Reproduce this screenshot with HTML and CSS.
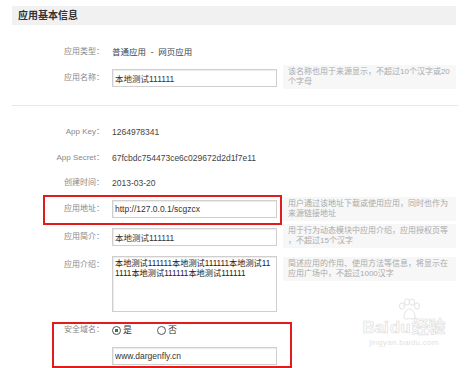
FILE: index.html
```html
<!DOCTYPE html>
<html lang="zh-CN">
<head>
  <meta charset="UTF-8">
  <meta name="viewport" content="width=device-width, initial-scale=1.0">
  <title>应用基本信息</title>
  <link rel="stylesheet" href="styles.css">
</head>
<body>
  <div class="page">
    <div class="section-title">应用基本信息</div>

    <div class="row row-type">
      <span class="label">应用类型：</span>
      <span class="value">普通应用 &nbsp;- &nbsp;网页应用</span>
    </div>

    <div class="row row-hinted row-name">
      <label class="label" for="appName">应用名称：</label>
      <input class="field" id="appName" type="text" value="本地测试111111">
      <div class="hint">该名称也用于来源显示，不超过10个汉字或20<br>个字母</div>
    </div>

    <hr class="divider">

    <div class="row row-key">
      <span class="label">App Key：</span>
      <span class="value">1264978341</span>
    </div>
    <div class="row row-secret">
      <span class="label">App Secret：</span>
      <span class="value">67fcbdc754473ce6c029672d2d1f7e11</span>
    </div>
    <div class="row row-created">
      <span class="label">创建时间：</span>
      <span class="value">2013-03-20</span>
    </div>

    <div class="row row-hinted row-url">
      <label class="label" for="appUrl">应用地址：</label>
      <input class="field" id="appUrl" type="text" value="http://127.0.0.1/scgzcx">
      <div class="hint">用户通过该地址下载或使用应用，同时也作为<br>来源链接地址</div>
    </div>

    <div class="row row-hinted row-brief">
      <label class="label" for="appBrief">应用简介：</label>
      <input class="field" id="appBrief" type="text" value="本地测试111111">
      <div class="hint">用于行为动态模块中应用介绍，应用授权页等<br>，不超过15个汉字</div>
    </div>

    <div class="row row-desc">
      <label class="label" for="appDesc">应用介绍：</label>
      <textarea class="field area" id="appDesc">本地测试111111本地测试111111本地测试111111本地测试111111本地测试111111</textarea>
      <div class="hint">简述应用的作用、使用方法等信息，将显示在<br>应用广场中，不超过1000汉字</div>
    </div>

    <div class="row row-safe">
      <span class="label">安全域名：</span>
      <div class="radios">
        <label class="radio"><input type="radio" name="safe" checked>是</label>
        <label class="radio"><input type="radio" name="safe">否</label>
      </div>
    </div>
    <div class="row row-domain">
      <span class="label"></span>
      <input class="field" type="text" value="www.dargenfly.cn">
    </div>

    <div class="mark mark-url"></div>
    <div class="mark mark-domain"></div>

    <div class="watermark">
      <svg class="paw" width="26" height="22" viewBox="0 0 26 22">
        <g fill="none" stroke="#e2e2e2" stroke-width="1">
          <ellipse cx="6" cy="8" rx="2.5" ry="3.2"/>
          <ellipse cx="11" cy="4" rx="2.5" ry="3.2"/>
          <ellipse cx="16" cy="4" rx="2.5" ry="3.2"/>
          <ellipse cx="21" cy="8" rx="2.5" ry="3.2"/>
          <path d="M8 19c0-5 3-8 5.5-8s5.5 3 5.5 8c0 2-2 2.5-5.5 1.5C10 21.5 8 21 8 19z"/>
        </g>
      </svg>
      <div class="mark-logo">Bai<span class="du">du</span>经验</div>
      <div class="mark-site">jingyan.baidu.com</div>
    </div>
  </div>
</body>
</html>
```

FILE: styles.css
```css
body {
  margin: 0;
  background: #fff;
  font-family: "Liberation Sans", "Noto Sans CJK SC", sans-serif;
}
.page {
  position: relative;
  height: 368px;
  padding: 6px 0 0 12px;
  box-sizing: border-box;
  overflow: hidden;
}
.section-title {
  width: 444px;
  height: 19px;
  line-height: 19px;
  padding-left: 6px;
  box-sizing: border-box;
  background: #f1f1f1;
  font-size: 10px;
  font-weight: bold;
  color: #333;
}
.row {
  display: flex;
  align-items: flex-start;
}
.label {
  width: 92px;
  flex: none;
  text-align: right;
  font-size: 8px;
  line-height: 18px;
  color: #888;
}
.value {
  margin-left: 8px;
  font-size: 8.5px;
  line-height: 18px;
  color: #444;
}
.field {
  margin: 0 0 0 8px;
  width: 165px;
  height: 18px;
  flex: none;
  box-sizing: border-box;
  padding: 0 2px;
  border: 1px solid #cfcfcf;
  box-shadow: inset 1px 1px 1px #ececec;
  background: #fff;
  font-family: "Liberation Sans", "Noto Sans CJK SC", sans-serif;
  font-size: 8.5px;
  color: #333;
  outline: none;
}
.area {
  height: 56px;
  padding: 2px 2px;
  resize: none;
  font-size: 8.2px;
  line-height: 10px;
  color: #222;
  overflow: hidden;
  word-break: break-all;
}
.hint {
  margin-left: 6px;
  width: 173px;
  box-sizing: border-box;
  padding: 2px 5px;
  background: #f7f7f7;
  font-size: 8px;
  line-height: 10px;
  color: #aaa;
  white-space: nowrap;
  overflow: hidden;
}
.row-hinted .label,
.row-hinted .field {
  margin-top: 4px;
}
.row-url .label,
.row-url .field {
  margin-top: 3px;
}
.row-type { margin-top: 18px; }
.row-name { margin-top: 4px; }
.divider {
  margin: 16px 0 0;
  width: 446px;
  height: 0;
  border: 0;
  border-top: 1px solid #e8e8e8;
}
.row-key { margin-top: 17px; }
.row-secret { margin-top: 8px; }
.row-created { margin-top: 7px; }
.row-url { margin-top: 5px; }
.row-brief { margin-top: 3px; }
.row-desc { margin-top: 8px; }
.row-desc .hint { margin-top: 1px; }
.row-safe { margin-top: 9px; }
.row-domain { margin-top: 8px; }

.radios {
  display: flex;
  margin-left: 8px;
  font-size: 9px;
  line-height: 18px;
  color: #333;
}
.radio {
  display: flex;
  align-items: center;
  width: 45px;
}
.radio input {
  appearance: none;
  margin: 0 2px 0 0;
  width: 9px;
  height: 9px;
  border: 1px solid #555;
  border-radius: 50%;
  box-sizing: border-box;
  background: #fff;
}
.radio input:checked {
  background: radial-gradient(circle, #2f7a4a 0 1.6px, #fff 2px);
}

.mark {
  position: absolute;
  border: 2px solid #e31b1b;
  box-sizing: border-box;
}
.mark-url {
  left: 43px;
  top: 195px;
  width: 239px;
  height: 30px;
}
.mark-domain {
  left: 52px;
  top: 322px;
  width: 240px;
  height: 46px;
}

.watermark {
  position: absolute;
  left: 358px;
  top: 298px;
  width: 92px;
  text-align: center;
}
.paw {
  display: block;
  margin: 0 0 -2px 38px;
}
.mark-logo {
  font-size: 17px;
  font-weight: bold;
  line-height: 20px;
  white-space: nowrap;
  color: #fcfcfc;
  -webkit-text-stroke: 0.6px #dcdcdc;
}
.mark-logo .du {
  margin: 0 1px;
}
.mark-site {
  font-size: 8px;
  line-height: 10px;
  white-space: nowrap;
  color: #e2e2e2;
  letter-spacing: 0.3px;
}
```
